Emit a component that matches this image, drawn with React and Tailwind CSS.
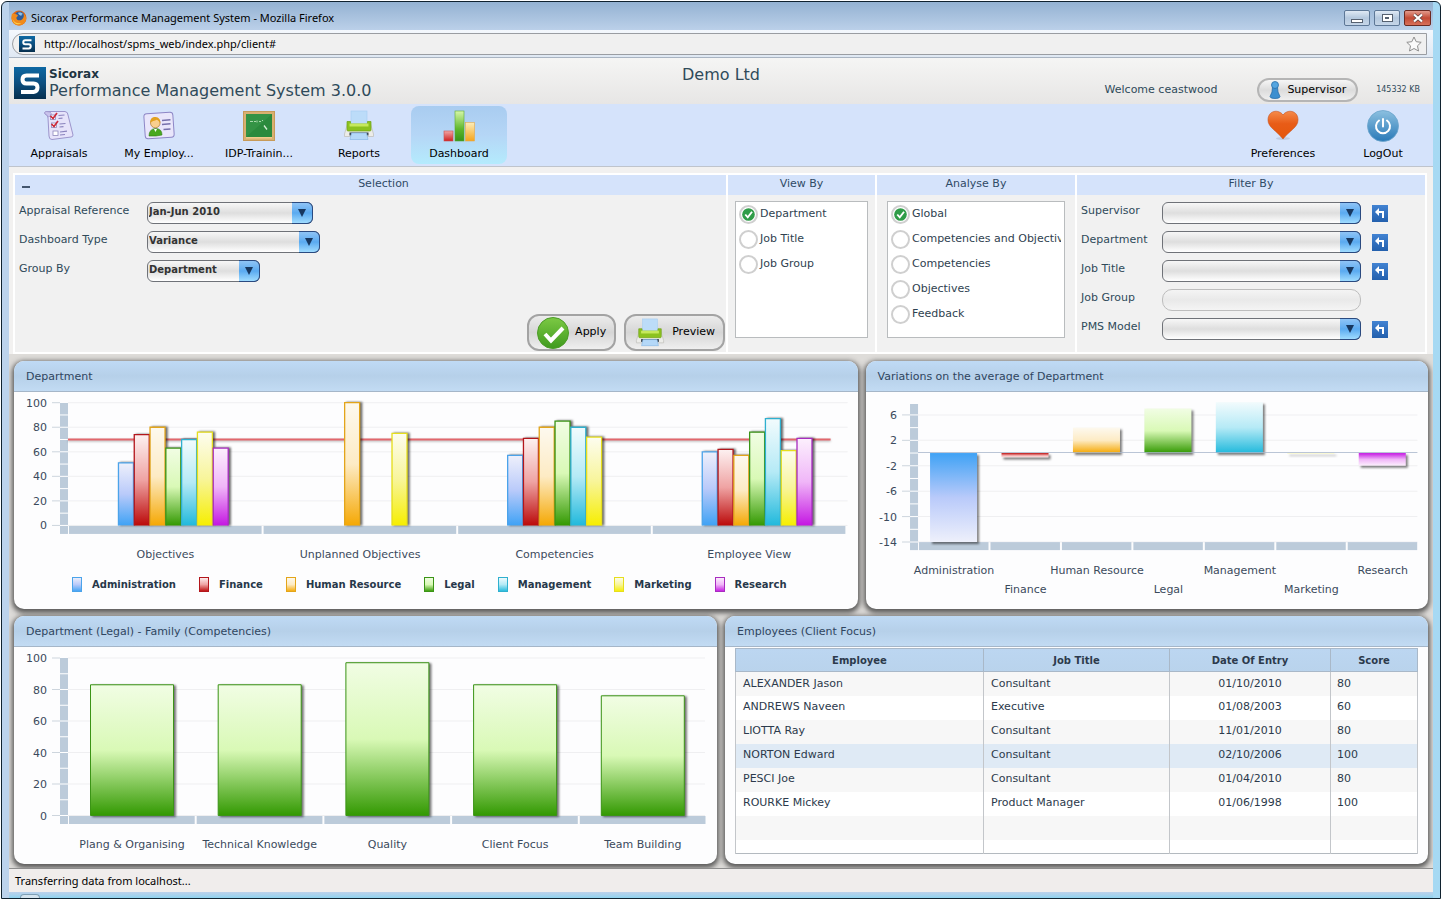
import { useState } from "react";

const SERIES = [
  { key: "adm", name: "Administration", light: "#eef0fb", mid: "#b9cafa", strong: "#3fa2f5", line: "#4ba3ea" },
  { key: "fin", name: "Finance", light: "#fdf1f1", mid: "#efa3a3", strong: "#bb0a0a", line: "#b3161c" },
  { key: "hr", name: "Human Resource", light: "#fdf9ef", mid: "#fdebc4", strong: "#f5a804", line: "#e3a51a" },
  { key: "leg", name: "Legal", light: "#f1fde4", mid: "#d9f9b6", strong: "#339902", line: "#3b9416" },
  { key: "man", name: "Management", light: "#f2fbfd", mid: "#b5eaf6", strong: "#21b9dc", line: "#2fb0cf" },
  { key: "mar", name: "Marketing", light: "#fdfdf0", mid: "#f8f59a", strong: "#f6ee00", line: "#e6de1c" },
  { key: "res", name: "Research", light: "#fcf0fd", mid: "#f0b6f8", strong: "#c417e2", line: "#a82cc0" },
];

const DEPARTMENT_GROUPS = [
  { label: "Objectives", values: [51, 74, 80, 63, 70, 76, 63] },
  { label: "Unplanned Objectives", values: [0, 0, 100, 0, 0, 75, 0] },
  { label: "Competencies", values: [57, 71, 80, 85, 80, 72, 0] },
  { label: "Employee View", values: [60, 62, 57, 76, 87, 61, 71] },
];

const VARIATIONS = [-14, -0.7, 4, 7, 8, -0.1, -2];

const FAMILIES = [
  { label: "Plang & Organising", value: 83 },
  { label: "Technical Knowledge", value: 83 },
  { label: "Quality", value: 97 },
  { label: "Client Focus", value: 83 },
  { label: "Team Building", value: 76 },
];

const EMPLOYEES = [
  { name: "ALEXANDER Jason", job: "Consultant", date: "01/10/2010", score: 80 },
  { name: "ANDREWS Naveen", job: "Executive", date: "01/08/2003", score: 60 },
  { name: "LIOTTA Ray", job: "Consultant", date: "11/01/2010", score: 80 },
  { name: "NORTON Edward", job: "Consultant", date: "02/10/2006", score: 100 },
  { name: "PESCI Joe", job: "Consultant", date: "01/04/2010", score: 80 },
  { name: "ROURKE Mickey", job: "Product Manager", date: "01/06/1998", score: 100 },
];

/* ---------- icons ---------- */

function Logo({ className }) {
  return (
    <svg viewBox="0 0 32 32" className={className} aria-hidden="true">
      <defs>
        <linearGradient id="logoBg" x1="0" y1="0" x2="0" y2="1">
          <stop offset="0" stopColor="#0d68a3" />
          <stop offset="0.5" stopColor="#0c4f80" />
          <stop offset="1" stopColor="#062f4e" />
        </linearGradient>
      </defs>
      <rect width="32" height="32" fill="url(#logoBg)" />
      <path d="M25 8.500H12.500q-4 0-4 4t4 4h7q4 0 4 4t-4 4.500H7" fill="none" stroke="#fff" strokeWidth="4" />
    </svg>
  );
}

function FirefoxIcon() {
  return (
    <svg viewBox="0 0 16 16" className="size-4" aria-hidden="true">
      <circle cx="8" cy="8" r="7.500" fill="#e2650f" />
      <circle cx="8.500" cy="6.500" r="5" fill="#2d5c9c" />
      <path d="M7 3c2-1 4 0 5 1-1 0-2 1-1.500 2C9 5 8 5 7 3z" fill="#8fc3e8" />
      <path d="M1 3.500C2 4 3 4 4.500 4c1 0 1.500 1 2.500 1.500C6.500 7 5 7 5.500 8.500c.5 2 3.500 2.500 5.500 1 2-1.500 2-4 1.500-6 3 2.500 3.500 6.500 1 9.500-3 3.500-9 3-11.500-.5C.300 9.800.2 6.500 1 3.500z" fill="#f08a1c" />
      <path d="M1.500 9c1.500 3.500 5 5 9 4-3 2.500-8 1.500-9-4z" fill="#fbd04a" />
    </svg>
  );
}

function ChecklistIcon() {
  return (
    <svg viewBox="0 0 32 32" className="size-8" aria-hidden="true">
      <path d="M2 4Q1 2 3 1.500L22 1.500Q25 2 25 5L30 25Q30 27 28 27L9 29.500Q6 29.500 6 26L5 8Q5 5 2 4Z" fill="#e6e3fa" stroke="#9c95cc" />
      <path d="M2 4Q1 2 3 1.500L7 2Q9 3 8 6L5 7Q5 5 2 4Z" fill="#c9c3ec" stroke="#9c95cc" strokeWidth=".7" />
      <g fill="#fff" stroke="#8d87bb" strokeWidth=".8">
        <rect x="7.500" y="5" width="5" height="4.500" />
        <rect x="8.500" y="13" width="5" height="4.500" />
        <rect x="10" y="21" width="5" height="4.500" />
      </g>
      <g stroke="#cc2a3a" strokeWidth="1.700" fill="none">
        <path d="m7.500 6 2.500 2.500L14 3" />
        <path d="m8.500 14 2.500 2.500L15 11" />
      </g>
      <path d="M15.500 5.500l6-.5M15.500 8.500l4-.3M16.500 14l6-.5M16.500 17l4-.3M17 22l7-.8M17 25l5-.5" stroke="#8a83bd" strokeWidth="1.200" />
    </svg>
  );
}

function IdCardIcon() {
  return (
    <svg viewBox="0 0 32 32" className="size-8" aria-hidden="true">
      <rect x="1.500" y="3" width="29" height="25" rx="3" fill="#e9e6fb" stroke="#8d86c6" transform="rotate(-4 16 15)" />
      <path d="M6 26q0-7 6.500-7.500Q19 18.500 19 25l-6 1z" fill="#48a81f" stroke="#2f7c12" strokeWidth=".6" />
      <path d="m11 19 1.500 3 1.500-3z" fill="#fff" />
      <circle cx="12.300" cy="13" r="4.800" fill="#f9cf8e" stroke="#a06a20" strokeWidth=".6" />
      <path d="M7.300 13C6.800 8 10 6.700 12.500 6.900c3.500.2 5.200 2.900 4.700 6.300-1.200-2-2-3-3.500-3.500-2 1-4.800 1.300-6.400 3.300z" fill="#e2a11f" />
      <path d="M19 10.500l8.500-.7M19 14.500l8.500-.7M20.500 19.500l7-.5" stroke="#7670ab" strokeWidth="1.400" />
    </svg>
  );
}

function BoardIcon() {
  return (
    <svg viewBox="0 0 32 32" className="size-8" aria-hidden="true">
      <rect x=".5" y="1.500" width="31" height="29" fill="#d9b070" stroke="#c79a58" />
      <rect x="3" y="4" width="26" height="23" fill="#2b8a3d" />
      <path d="M3 27V4h26z" fill="#43a052" opacity=".4" />
      <path d="M7 11.500h3m1 0h2m1-1v2m2-1h2m1-1h1" stroke="#a9d8ab" strokeWidth="1" />
      <path d="m21 15.500 3 4" stroke="#d8efd8" strokeWidth="1.300" />
      <rect x="3" y="27" width="26" height="1.500" fill="#f0cc8b" />
    </svg>
  );
}

function PrinterIcon({ className }) {
  return (
    <svg viewBox="0 0 32 32" className={className} aria-hidden="true">
      <path d="M5 12h22l3.500 12v2.500H1.500V24z" fill="#ecece9" stroke="#c2c2bd" strokeWidth=".8" />
      <rect x="8" y="1" width="16" height="13" fill="#bcdcf9" stroke="#a5cef2" strokeWidth=".6" />
      <path d="M4 11.500h3.500V14h17v-2.500H28V20q0 1-1 1H5q-1 0-1-1z" fill="#8cc21f" stroke="#6ea317" strokeWidth=".7" />
      <rect x="6.500" y="13.500" width="19" height="3" fill="#c5e85c" />
      <rect x="6.500" y="22.500" width="19" height="3" fill="#36404c" />
      <path d="M8.500 23h15l1.500 6.500H7z" fill="#b4d8f8" stroke="#7fb2e2" strokeWidth=".6" />
    </svg>
  );
}

function BarsIcon() {
  return (
    <svg viewBox="0 0 32 32" className="size-8" aria-hidden="true">
      <defs>
        <linearGradient id="icoRed" x1="0" y1="0" x2="0" y2="1">
          <stop offset="0" stopColor="#f2a7a7" />
          <stop offset="1" stopColor="#cf2020" />
        </linearGradient>
        <linearGradient id="icoGreen" x1="0" y1="0" x2="0" y2="1">
          <stop offset="0" stopColor="#d6f7a8" />
          <stop offset="0.6" stopColor="#5fb82c" />
          <stop offset="1" stopColor="#36941a" />
        </linearGradient>
        <linearGradient id="icoOrange" x1="0" y1="0" x2="0" y2="1">
          <stop offset="0" stopColor="#fdedb8" />
          <stop offset="1" stopColor="#f5a51c" />
        </linearGradient>
      </defs>
      <rect x="1" y="21" width="9" height="10" fill="url(#icoRed)" stroke="#c95050" strokeWidth=".6" />
      <rect x="12" y="1" width="9" height="30" fill="url(#icoGreen)" stroke="#5da832" strokeWidth=".6" />
      <rect x="22.500" y="12.500" width="9" height="18.500" fill="url(#icoOrange)" stroke="#e5a94a" strokeWidth=".6" />
    </svg>
  );
}

function HeartIcon() {
  return (
    <svg viewBox="0 0 32 32" className="size-8" aria-hidden="true">
      <defs>
        <linearGradient id="icoHeart" x1="0" y1="0" x2="0" y2="1">
          <stop offset="0" stopColor="#f58a4a" />
          <stop offset="0.45" stopColor="#e85c17" />
          <stop offset="1" stopColor="#e4560c" />
        </linearGradient>
      </defs>
      <ellipse cx="16" cy="28.500" rx="7" ry="1.500" fill="#a9b6cc" opacity=".5" />
      <path d="M16 5C12-1 1 0 1 10c0 7.500 9 11 15 19 6-8 15-11.500 15-19C31 0 20-1 16 5z" fill="url(#icoHeart)" stroke="#c9531c" strokeWidth=".6" />
    </svg>
  );
}

function PowerIcon() {
  return (
    <svg viewBox="0 0 32 32" className="size-8" aria-hidden="true">
      <defs>
        <linearGradient id="icoPower" x1="0" y1="0" x2="0" y2="1">
          <stop offset="0" stopColor="#8cc0e0" />
          <stop offset="1" stopColor="#2a7ab8" />
        </linearGradient>
      </defs>
      <circle cx="16" cy="16" r="15.500" fill="url(#icoPower)" stroke="#6ba4cb" strokeWidth=".8" />
      <path d="M12 10.500a7 7 0 1 0 8 0" fill="none" stroke="#fff" strokeWidth="2" strokeLinecap="round" />
      <path d="M16 9v7.500" stroke="#fff" strokeWidth="2" strokeLinecap="round" />
    </svg>
  );
}

function PawnIcon() {
  return (
    <svg viewBox="0 0 12 18" className="h-[18px] w-3" aria-hidden="true">
      <path d="M3.500 6h5L9 11l2 4.500q0 2-5 2t-5-2L3 11z" fill="#3c8fd0" stroke="#2a6ea8" strokeWidth=".8" />
      <circle cx="6" cy="4" r="3.500" fill="#54a5e0" stroke="#2a6ea8" strokeWidth=".8" />
    </svg>
  );
}

function CheckIcon({ className }) {
  return (
    <svg viewBox="0 0 32 32" className={className} aria-hidden="true">
      <defs>
        <linearGradient id="icoCheck" x1="0" y1="0" x2="0" y2="1">
          <stop offset="0" stopColor="#7cc944" />
          <stop offset="1" stopColor="#3f9a1e" />
        </linearGradient>
      </defs>
      <circle cx="16" cy="16" r="15.500" fill="url(#icoCheck)" stroke="#4c9c28" />
      <path d="m8 17 6 6.500L26 11" fill="none" stroke="#fff" strokeWidth="4" />
    </svg>
  );
}

/* ---------- browser chrome ---------- */

function TitleBar() {
  return (
    <div className="flex h-7 items-center bg-linear-to-b from-[#94b2d2] to-[#bbd0e9] px-[2px] pt-1 font-['Noto_Sans','Open_Sans',sans-serif] text-[11px] text-black">
      <FirefoxIcon />
      <span className="ml-1 flex-1 pt-px">Sicorax Performance Management System - Mozilla Firefox</span>
      <div className="flex gap-1">
        <button aria-label="Minimise" className="flex h-4 w-[26px] items-end justify-center rounded-xs border border-[#5d7796] bg-linear-to-b from-[#dfe9f4] via-[#b4c8de] to-[#c6d6e8] pb-[2px]">
          <span className="h-1 w-3 border border-[#566170] bg-white" />
        </button>
        <button aria-label="Maximise" className="flex h-4 w-[26px] items-center justify-center rounded-xs border border-[#5d7796] bg-linear-to-b from-[#dfe9f4] via-[#b4c8de] to-[#c6d6e8]">
          <span className="flex h-2 w-[11px] items-center justify-center border border-[#566170] bg-white">
            <span className="h-[2px] w-1 bg-[#566170]" />
          </span>
        </button>
        <button aria-label="Close" className="flex h-4 w-[27px] items-center justify-center rounded-xs border border-[#6b2a22] bg-linear-to-b from-[#e29a8c] via-[#c24a35] to-[#d8705a]">
          <svg viewBox="0 0 12 10" className="h-[10px] w-3" aria-hidden="true">
            <path d="m2 1.500 8 7M10 1.500l-8 7" stroke="#5b4040" strokeWidth="3.600" />
            <path d="m2 1.500 8 7M10 1.500l-8 7" stroke="#fff" strokeWidth="2.200" />
          </svg>
        </button>
      </div>
    </div>
  );
}

function AddressBar() {
  return (
    <div className="border-b border-[#a9b4c2] bg-linear-to-b from-[#f4f8fd] to-[#dfe8f3] pt-[3px] pr-[6px] pb-[2px] pl-[3px]">
      <form className="flex h-[22px] items-center rounded-l-xl border border-[#9a9da2] bg-[#f0f0f0] pr-[4px] pl-[6px]" onSubmit={(e) => e.preventDefault()}>
        <Logo className="size-4" />
        <input
          aria-label="Address"
          defaultValue="http://localhost/spms_web/index.php/client#"
          className="ml-[9px] min-w-0 flex-1 bg-transparent font-['Noto_Sans','Open_Sans',sans-serif] text-[11px] text-black outline-none"
        />
        <svg viewBox="0 0 16 16" className="size-4" aria-hidden="true">
          <path d="m8 1 2.200 4.700 5 .6-3.700 3.500 1 5.200L8 12.500 3.500 15l1-5.200L.8 6.300l5-.6z" fill="#fafafa" stroke="#8e8e8e" />
        </svg>
      </form>
    </div>
  );
}

/* ---------- application header ---------- */

function AppHeader() {
  return (
    <header className="grid h-[46px] grid-cols-[1fr_auto_1fr] bg-linear-to-b from-[#f5f5f4] to-[#e7e6e5] text-[#2f4a5a]">
      <div className="flex items-center gap-[3px] pt-[3px] pl-[5px]">
        <Logo className="size-8" />
        <div>
          <div className="text-[12px] leading-4 font-bold text-[#1e3442]">Sicorax</div>
          <div className="text-[16px] leading-[18px]">Performance Management System 3.0.0</div>
        </div>
      </div>
      <div className="pt-[5px] text-[16px] leading-6">Demo Ltd</div>
      <div className="flex items-center justify-end pt-[18px] pr-[13px]">
        <span className="text-[11px]">Welcome ceastwood</span>
        <button className="ml-10 flex h-6 items-center gap-[6px] rounded-full border-2 border-[#b5b5b5] bg-linear-to-b from-[#f6f6f6] via-[#dcdcdc] to-[#efefef] px-[10px] text-[11px] text-black">
          <PawnIcon />
          Supervisor
        </button>
        <span className="ml-[18px] text-[8px]">145332 KB</span>
      </div>
    </header>
  );
}

function NavItem({ label, icon, active, onClick }) {
  return (
    <button
      onClick={onClick}
      aria-current={active ? "page" : undefined}
      className={`flex h-[58px] w-24 flex-col items-center rounded-lg pt-1 text-[11px] leading-4 whitespace-nowrap text-black ${
        active ? "bg-linear-to-b from-[#a9ccf0] via-[#b5d6f6] to-[#b4ebfd]" : ""
      }`}
    >
      {icon}
      <span className="mt-1">{label}</span>
    </button>
  );
}

function NavBar() {
  const [page, setPage] = useState("Dashboard");

  const left = [
    { label: "Appraisals", icon: <ChecklistIcon /> },
    { label: "My Employ...", icon: <IdCardIcon /> },
    { label: "IDP-Trainin...", icon: <BoardIcon /> },
    { label: "Reports", icon: <PrinterIcon className="size-8" /> },
    { label: "Dashboard", icon: <BarsIcon /> },
  ];

  return (
    <nav className="flex h-[63px] items-start justify-between border-b border-[#bfc4cc] bg-[#d5e3fb] px-[2px] pt-[2px]">
      <div className="flex gap-1">
        {left.map((n) => (
          <NavItem key={n.label} label={n.label} icon={n.icon} active={page === n.label} onClick={() => setPage(n.label)} />
        ))}
      </div>
      <div className="flex gap-1">
        <NavItem label="Preferences" icon={<HeartIcon />} />
        <NavItem label="LogOut" icon={<PowerIcon />} />
      </div>
    </nav>
  );
}

/* ---------- selection panel ---------- */

function Combo({ id, options, className }) {
  return (
    <div className={`relative ${className}`}>
      <select
        id={id}
        className="block h-[22px] w-full appearance-none rounded-md border border-[#6f7278] bg-linear-to-b from-[#f7f7f7] via-[#dedede] to-white pr-6 pb-1 pl-px text-[10px] font-bold text-[#333] outline-none"
      >
        {options.map((o) => (
          <option key={o}>{o}</option>
        ))}
      </select>
      <span className="pointer-events-none absolute inset-y-0 right-0 flex w-[21px] items-center justify-center rounded-r-md border border-l-0 border-[#2a4a80] bg-linear-to-b from-[#8fc4f6] via-[#5aaaf0] to-[#9fdcff]">
        <svg viewBox="0 0 10 8" className="h-2 w-[10px]" aria-hidden="true">
          <path d="M1 0h8L5 8z" fill="#17375f" />
        </svg>
      </span>
    </div>
  );
}

function PanelColumn({ title, className, children, collapsible }) {
  return (
    <section className={`flex flex-col bg-[#f1f1f1] ${className}`}>
      <div className="flex h-5 items-start bg-[#d5e3fb] text-[11px] leading-[18px] text-[#2f4a66]">
        {collapsible && (
          <button aria-label="Collapse" className="flex h-5 w-[26px] items-center pt-1 pl-[7px]">
            <span className="h-[2px] w-2 bg-[#44566e]" />
          </button>
        )}
        <h2 className="flex-1 text-center">{title}</h2>
      </div>
      {children}
    </section>
  );
}

function RadioList({ name, label, options, className }) {
  const [value, setValue] = useState(options[0]);

  return (
    <div role="radiogroup" aria-label={label} className={`mt-[6px] h-[137px] border border-[#b9bcbe] bg-white px-[3px] pt-[3px] ${className}`}>
      {options.map((o) => (
        <label key={o} className="flex h-[25px] items-start gap-[2px] overflow-hidden text-[11px] leading-[17px] whitespace-nowrap text-[#2f4250]">
          <span className="relative size-[19px] shrink-0">
            <input
              type="radio"
              name={name}
              checked={value === o}
              onChange={() => setValue(o)}
              className="block size-[19px] appearance-none rounded-full border-2 border-[#cfcfcf] bg-white"
            />
            {value === o && (
              <svg viewBox="0 0 14 14" className="pointer-events-none absolute top-[3px] left-[3px] size-[13px]" aria-hidden="true">
                <circle cx="7" cy="7" r="6.800" fill="#2f9c48" />
                <path d="m3.500 7 2.700 3 4.600-6" fill="none" stroke="#fff" strokeWidth="2" />
              </svg>
            )}
          </span>
          {o}
        </label>
      ))}
    </div>
  );
}

function ActionButton({ icon, children }) {
  return (
    <button className="flex h-[37px] items-center gap-[6px] rounded-xl border-2 border-[#a3a3a3] bg-linear-to-b from-[#ececec] via-[#d6d6d6] to-[#efefef] px-2 text-[11px] text-black">
      {icon}
      {children}
    </button>
  );
}

function ResetButton({ field }) {
  return (
    <button aria-label={`Reset ${field}`} className="ml-[11px] flex h-[17px] w-4 items-center justify-center bg-linear-to-b from-[#4283d2] to-[#2360ad]">
      <svg viewBox="0 0 12 12" className="size-3" aria-hidden="true">
        <path d="M3 5h6v6" fill="none" stroke="#fff" strokeWidth="2" />
        <path d="M5 1v8L1 5z" fill="#fff" />
      </svg>
    </button>
  );
}

function SelectionPanel() {
  const selection = [
    { id: "reference", label: "Appraisal Reference", value: "Jan-Jun 2010", width: "w-[166px]" },
    { id: "type", label: "Dashboard Type", value: "Variance", width: "w-[173px]" },
    { id: "group", label: "Group By", value: "Department", width: "w-[113px]" },
  ];
  const filters = ["Supervisor", "Department", "Job Title", "Job Group", "PMS Model"];

  return (
    <div className="mt-[6px] mr-[6px] ml-1 flex gap-[2px] border-2 border-white bg-white">
      <PanelColumn title="Selection" className="min-w-0 flex-1" collapsible>
        <div className="flex flex-1 flex-col gap-[7px] pt-[7px] pl-1">
          {selection.map((s) => (
            <div key={s.id} className="flex">
              <label htmlFor={s.id} className="w-32 text-[11px] leading-[18px] text-[#2f4a5a]">
                {s.label}
              </label>
              <Combo id={s.id} options={[s.value]} className={s.width} />
            </div>
          ))}
        </div>
        <div className="flex justify-end gap-2 pr-px pb-px">
          <ActionButton icon={<CheckIcon className="size-8" />}>Apply</ActionButton>
          <ActionButton icon={<PrinterIcon className="h-[30px] w-8" />}>Preview</ActionButton>
        </div>
      </PanelColumn>

      <PanelColumn title="View By" className="w-[147px]">
        <RadioList name="view" label="View By" className="mx-[7px]" options={["Department", "Job Title", "Job Group"]} />
      </PanelColumn>

      <PanelColumn title="Analyse By" className="w-[198px]">
        <RadioList
          name="analyse"
          label="Analyse By"
          className="mx-[10px]"
          options={["Global", "Competencies and Objectives", "Competencies", "Objectives", "Feedback"]}
        />
      </PanelColumn>

      <PanelColumn title="Filter By" className="w-[348px]">
        <div className="flex flex-col gap-[7px] pt-[7px] pb-3 pl-1">
          {filters.map((f) => (
            <div key={f} className="flex items-center">
              <label htmlFor={`filter-${f}`} className="w-[81px] self-start text-[11px] leading-[18px] text-[#2f4a5a]">
                {f}
              </label>
              {f === "Job Group" ? (
                <input
                  id={`filter-${f}`}
                  disabled
                  className="h-[22px] w-[199px] rounded-[10px] border border-[#bdbdbd] bg-linear-to-b from-[#f4f4f4] via-[#e9e9e9] to-[#f4f4f4]"
                />
              ) : (
                <>
                  <Combo id={`filter-${f}`} options={[""]} className="w-[199px]" />
                  <ResetButton field={f} />
                </>
              )}
            </div>
          ))}
        </div>
      </PanelColumn>
    </div>
  );
}

/* ---------- charts ---------- */

function SeriesGradients() {
  return (
    <svg className="absolute size-0" aria-hidden="true">
      <defs>
        {SERIES.map((s) => (
          <linearGradient key={s.key} id={`up-${s.key}`} x1="0" y1="0" x2="0" y2="1">
            <stop offset="0" stopColor={s.light} />
            <stop offset="0.5" stopColor={s.mid} />
            <stop offset="1" stopColor={s.strong} />
          </linearGradient>
        ))}
        {SERIES.map((s) => (
          <linearGradient key={s.key} id={`down-${s.key}`} x1="0" y1="0" x2="0" y2="1">
            <stop offset="0" stopColor={s.strong} />
            <stop offset="0.5" stopColor={s.mid} />
            <stop offset="1" stopColor={s.light} />
          </linearGradient>
        ))}
      </defs>
    </svg>
  );
}

function Card({ title, children }) {
  return (
    <section className="flex min-w-0 flex-col rounded-[10px] bg-[#fdfdfe] shadow-[0_2px_5px_2px_rgba(50,50,50,0.75)]">
      <h2 className="h-[31px] rounded-t-[10px] border-b border-[#a5b6c8] bg-linear-to-b from-[#bfdaf5] via-[#b6d0e9] to-[#c2dbf3] pl-3 text-[11px] leading-[31px] text-[#2f4560]">
        {title}
      </h2>
      {children}
    </section>
  );
}

// y axis (labels, ticks, band) and grid shared by the three charts
function Axes({ ticks, minor, top, bottom, y, axisX, right, count, step, labelX }) {
  return (
    <g>
      {ticks.map((t) => (
        <g key={t}>
          <path d={`M${axisX + 8} ${y(t)}H${right}`} stroke="#efeff1" />
          <path d={`M${axisX - 8} ${y(t)}H${axisX}`} stroke="#cdd5dd" />
          <text x={labelX} y={y(t) + 4} textAnchor="end">
            {t}
          </text>
        </g>
      ))}
      <rect x={axisX} y={top} width="8" height={bottom + 8 - top} fill="#bccbda" />
      {minor.map((t) => (
        <path key={t} d={`M${axisX} ${y(t)}h8`} stroke="#fff" />
      ))}
      {Array.from({ length: count }, (_, i) => (
        <rect key={i} x={axisX + 9 + i * step} y={bottom} width={step - 2} height="8" fill="#bccbda" />
      ))}
    </g>
  );
}

function DepartmentChart() {
  const y = (v) => 133.5 - v * 1.228;
  const step = 194.7;

  return (
    <Card title="Department">
      <svg viewBox="0 0 844 181" className="w-full text-[11px]" fill="#3b4a5c" role="img" aria-label="Scores by department">
        <Axes
          ticks={[0, 20, 40, 60, 80, 100]}
          minor={[0, 10, 20, 30, 40, 50, 60, 70, 80, 90]}
          top={11} bottom={134} y={y} axisX={46} right={834} count={4} step={step} labelX={33}
        />
        <path d={`M54 ${y(70)}H817`} stroke="#e2676c" strokeWidth="2" className="drop-shadow-[0_1px_1px_rgba(0,0,0,0.3)]" />
        {DEPARTMENT_GROUPS.map((g, i) => (
          <g key={g.label}>
            <g className="drop-shadow-[2px_0_1px_rgba(0,0,0,0.6)]">
              {g.values.map((v, k) =>
                v > 0 ? (
                  <path
                    key={k}
                    d={`M${104.5 + i * step + k * 15.8} 133.500V${y(v)}h15V133.500`}
                    fill={`url(#up-${SERIES[k].key})`}
                    stroke={SERIES[k].line}
                    strokeWidth="1.300"
                  />
                ) : null
              )}
            </g>
            <text x={151.5 + i * step} y="166" textAnchor="middle">
              {g.label}
            </text>
          </g>
        ))}
      </svg>
      <ul className="flex gap-[23px] pt-1 pl-[58px] text-[10px] font-bold text-[#27384a]">
        {SERIES.map((s) => (
          <li key={s.key} className="flex items-center gap-[10px] leading-[15px]">
            <svg viewBox="0 0 10 15" className="h-[15px] w-[10px]" aria-hidden="true">
              <rect x=".5" y=".5" width="9" height="14" fill={`url(#up-${s.key})`} stroke={s.line} />
            </svg>
            {s.name}
          </li>
        ))}
      </ul>
    </Card>
  );
}

function VariationChart() {
  const y = (v) => 61 - v * 6.35;
  const step = 71.4;

  return (
    <Card title="Variations on the average of Department">
      <svg viewBox="0 0 562 217" className="w-full text-[11px]" fill="#3b4a5c" role="img" aria-label="Variations on the average">
        <Axes
          ticks={[6, 2, -2, -6, -10, -14]}
          minor={[6, 4, 2, 0, -2, -4, -6, -8, -10, -12, -14]}
          top={12} bottom={150} y={y} axisX={44} right={551} count={7} step={step} labelX={31}
        />
        <g className="drop-shadow-[2px_2px_1px_rgba(0,0,0,0.5)]">
          {VARIATIONS.map((v, i) => (
            <rect
              key={SERIES[i].key}
              x={64 + i * step}
              y={v > 0 ? y(v) : 61}
              width="47"
              height={Math.abs(v) * 6.35}
              fill={`url(#${v > 0 ? "up" : "down"}-${SERIES[i].key})`}
            />
          ))}
        </g>
        <path d="M52 60.500H551" stroke="#a9b6cc" strokeOpacity=".8" />
        {SERIES.map((s, i) => (
          <text key={s.key} x={88 + i * step} y={i % 2 ? 201 : 182} textAnchor="middle">
            {s.name}
          </text>
        ))}
      </svg>
    </Card>
  );
}

function FamilyChart() {
  const y = (v) => 168.5 - v * 1.575;
  const step = 127.7;

  return (
    <Card title="Department (Legal) - Family (Competencies)">
      <svg viewBox="0 0 703 217" className="w-full text-[11px]" fill="#3b4a5c" role="img" aria-label="Legal scores by family">
        <Axes
          ticks={[0, 20, 40, 60, 80, 100]}
          minor={[0, 10, 20, 30, 40, 50, 60, 70, 80, 90]}
          top={11} bottom={169} y={y} axisX={46} right={691} count={5} step={step} labelX={33}
        />
        {FAMILIES.map((f, i) => (
          <g key={f.label}>
            <path
              d={`M${76.5 + i * step} 168.500V${y(f.value)}h83V168.500z`}
              fill="url(#up-leg)"
              stroke="#3b9416"
              className="drop-shadow-[2px_1px_1px_rgba(0,0,0,0.55)]"
            />
            <text x={118 + i * step} y="201" textAnchor="middle">
              {f.label}
            </text>
          </g>
        ))}
      </svg>
    </Card>
  );
}

function EmployeeTable() {
  const [selected, setSelected] = useState("NORTON Edward");

  return (
    <Card title="Employees (Client Focus)">
      <div className="px-[10px] pt-px pb-[10px]">
        <table className="w-full table-fixed border-collapse border border-[#b3b9bf] text-[11px] text-[#2c3a4c]">
          <colgroup>
            <col className="w-[248px]" />
            <col className="w-[186px]" />
            <col className="w-[161px]" />
            <col />
          </colgroup>
          <thead>
            <tr className="h-[23px] bg-linear-to-b from-[#bcd6f1] to-[#b9d3ec] text-[10px]">
              {["Employee", "Job Title", "Date Of Entry", "Score"].map((h) => (
                <th key={h} scope="col" className="border border-[#a9b8c8] p-0 font-bold">
                  {h}
                </th>
              ))}
            </tr>
          </thead>
          <tbody>
            {EMPLOYEES.map((e) => (
              <tr
                key={e.name}
                onClick={() => setSelected(e.name)}
                className={`h-6 ${selected === e.name ? "bg-[#dfeaf5]" : "odd:bg-[#f7f7f7] even:bg-white"}`}
              >
                <td className="border-x border-[#c3c6ca] px-[7px] py-0">{e.name}</td>
                <td className="border-x border-[#c3c6ca] px-[7px] py-0">{e.job}</td>
                <td className="border-x border-[#c3c6ca] p-0 text-center">{e.date}</td>
                <td className="border-x border-[#c3c6ca] px-[6px] py-0">{e.score}</td>
              </tr>
            ))}
            <tr className="h-6 bg-[#f7f7f7]">
              <td className="border-x border-[#c3c6ca]" />
              <td className="border-x border-[#c3c6ca]" />
              <td className="border-x border-[#c3c6ca]" />
              <td className="border-x border-[#c3c6ca]" />
            </tr>
            <tr className="h-[14px] bg-white">
              <td className="border-x border-[#c3c6ca]" />
              <td className="border-x border-[#c3c6ca]" />
              <td className="border-x border-[#c3c6ca]" />
              <td className="border-x border-[#c3c6ca]" />
            </tr>
          </tbody>
        </table>
      </div>
    </Card>
  );
}

export default function App() {
  return (
    <div className="min-h-screen bg-white p-px font-['DejaVu_Sans',Verdana,sans-serif]">
      <div className="overflow-hidden rounded-t-md border border-[#10222f] bg-linear-to-r from-[#bcd3ec] to-[#a6d9f3] px-[7px]">
        <SeriesGradients />
        <TitleBar />
        <AddressBar />
        <AppHeader />
        <NavBar />
        <main className="overflow-hidden border-b border-[#8d8d8d] bg-[#f2f1f0]">
          <SelectionPanel />
          <div className="bg-[#dedcd9] px-[5px] pt-[7px] pb-1">
            <div className="grid grid-cols-[3fr_2fr] gap-2">
              <DepartmentChart />
              <VariationChart />
            </div>
            <div className="mt-[7px] grid grid-cols-2 gap-2">
              <FamilyChart />
              <EmployeeTable />
            </div>
          </div>
        </main>
        <footer className="bg-[#f0edec] pl-[6px] font-['Noto_Sans','Open_Sans',sans-serif] text-[11px] leading-[23px] text-black">
          Transferring data from localhost...
        </footer>
        <div className="flex h-[6px] items-end overflow-hidden bg-linear-to-b from-[#bcd0ea] to-[#8fd3ef] pl-[11px]">
          <span className="h-1 w-5 rounded-t-full border border-b-0 border-[#7f9fb5] bg-[#d3e4ef]" />
        </div>
      </div>
    </div>
  );
}
